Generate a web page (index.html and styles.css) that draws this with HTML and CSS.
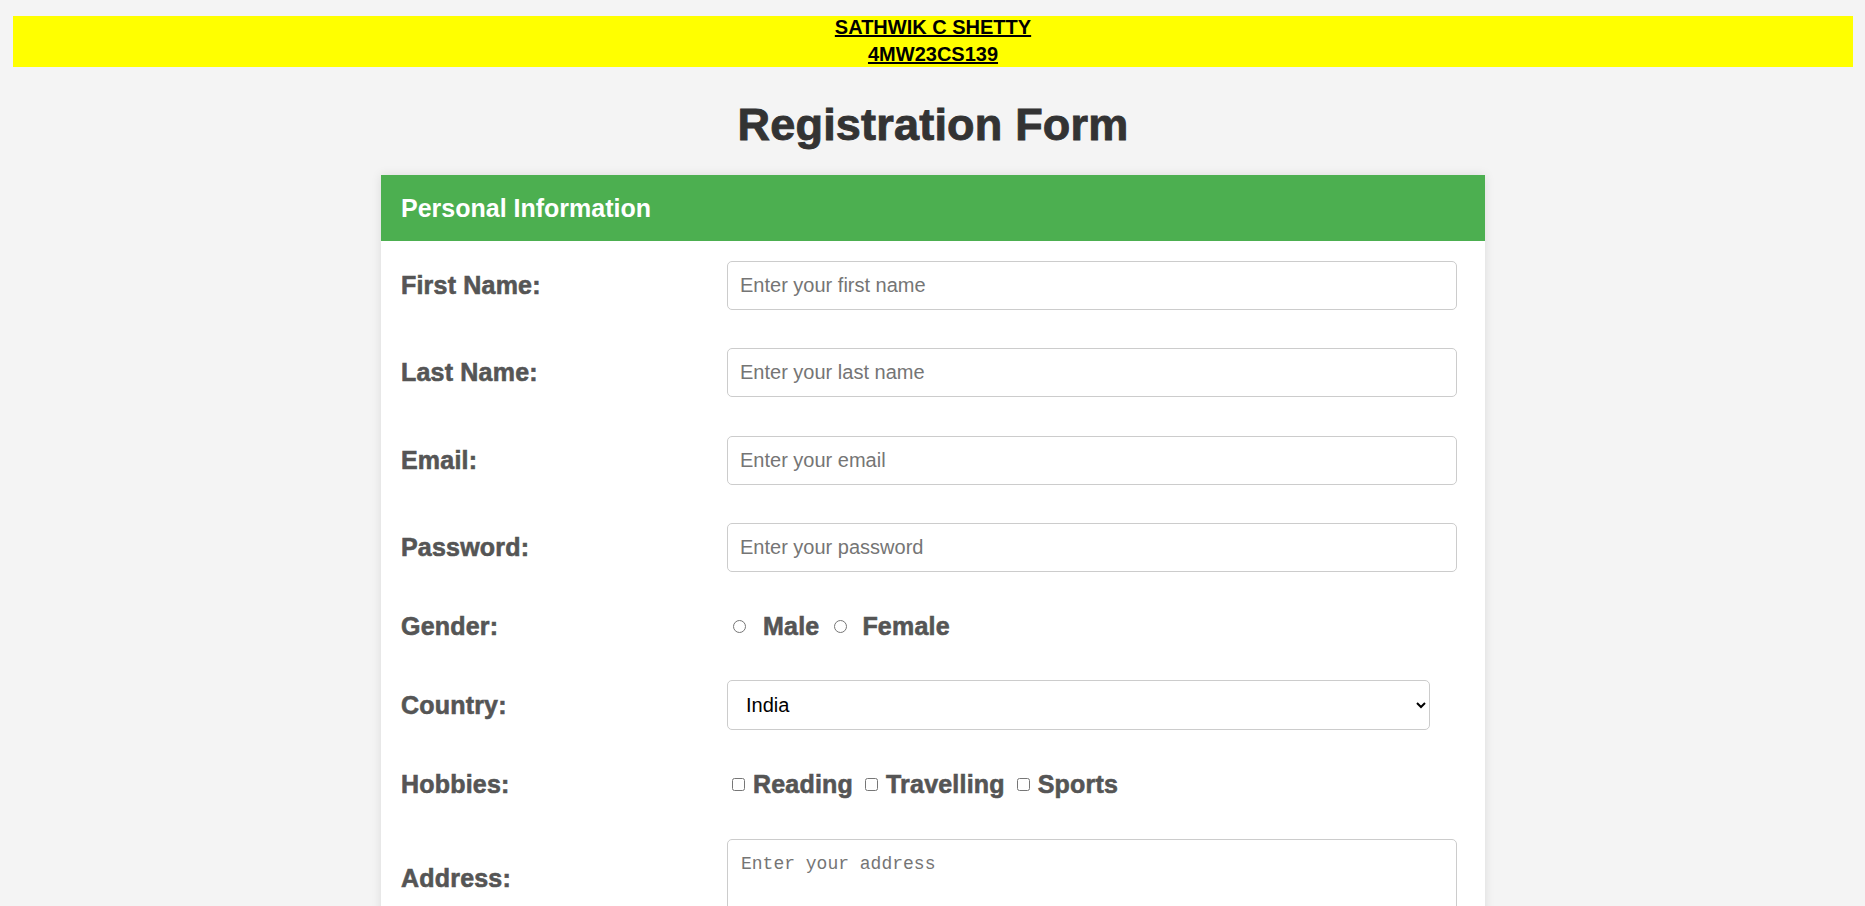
FILE: index.html
```html
<!DOCTYPE html>
<html lang="en">
<head>
<meta charset="utf-8">
<title>Registration Form</title>
<link rel="stylesheet" href="styles.css">
</head>
<body>
  <div class="banner">
    <div class="banner-line"><u>SATHWIK C SHETTY</u></div>
    <div class="banner-line second"><u>4MW23CS139</u></div>
  </div>

  <h1 class="title">Registration Form</h1>

  <div class="card">
    <div class="card-head">Personal Information</div>
    <form class="form">
      <label class="lbl" for="fname">First Name:</label>
      <input class="field" id="fname" type="text" placeholder="Enter your first name">

      <label class="lbl" for="lname">Last Name:</label>
      <input class="field" id="lname" type="text" placeholder="Enter your last name">

      <label class="lbl" for="email">Email:</label>
      <input class="field" id="email" type="email" placeholder="Enter your email">

      <label class="lbl" for="pass">Password:</label>
      <input class="field" id="pass" type="password" placeholder="Enter your password">

      <span class="lbl row-text">Gender:</span>
      <div class="choices row-text">
        <label class="opt"><input class="radio" type="radio" name="gender">Male</label>
        <label class="opt opt-next"><input class="radio" type="radio" name="gender">Female</label>
      </div>

      <label class="lbl" for="country">Country:</label>
      <select class="select" id="country">
        <option>India</option>
        <option>USA</option>
        <option>UK</option>
        <option>Australia</option>
      </select>

      <span class="lbl row-text">Hobbies:</span>
      <div class="choices row-text">
        <label class="opt"><input class="check" type="checkbox">Reading</label>
        <label class="opt opt-check"><input class="check" type="checkbox">Travelling</label>
        <label class="opt opt-check"><input class="check" type="checkbox">Sports</label>
      </div>

      <label class="lbl" for="addr">Address:</label>
      <textarea class="area" id="addr" placeholder="Enter your address"></textarea>

      <span class="lbl"></span>
      <button class="submit" type="submit">Register</button>
    </form>
  </div>
</body>
</html>
```

FILE: styles.css
```css
html {
  overflow: hidden;
}

body {
  margin: 16px 12px 0 13px;
  background: #f4f4f4;
  font-family: "Liberation Sans", Arial, sans-serif;
}

.banner {
  background: #ffff00;
  text-align: center;
  font-size: 20px;
  font-weight: bold;
  color: #000;
  padding-bottom: 1px;
}

.banner-line {
  line-height: 23px;
}

.banner-line.second {
  margin-top: 4px;
}

.banner u {
  text-decoration-thickness: 2px;
}

.title {
  margin: 32px 0 24px;
  text-align: center;
  font-size: 45px;
  font-weight: bold;
  color: #333;
  line-height: 52px;
  letter-spacing: 0.2px;
  -webkit-text-stroke: 0.9px #333;
}

.card {
  width: 60%;
  margin: 0 auto;
  background: #fff;
  box-shadow: 0 0 10px rgba(0, 0, 0, 0.1);
}

.card-head {
  height: 66px;
  display: flex;
  align-items: center;
  padding-left: 20px;
  background: #4caf50;
  color: #fff;
  font-size: 25px;
  font-weight: bold;
}

.form {
  display: grid;
  grid-template-columns: 326px 703px;
  row-gap: 38.6px;
  align-items: center;
  padding: 19.5px 20px 30px;
}

.lbl {
  font-size: 25px;
  font-weight: bold;
  color: #555;
  letter-spacing: 0.2px;
  -webkit-text-stroke: 0.6px #555;
}

.row-text {
  min-height: 31px;
  display: flex;
  align-items: center;
}

.field {
  box-sizing: border-box;
  width: 730px;
  height: 49px;
  padding: 0 12px;
  border: 1px solid #ccc;
  border-radius: 5px;
  font-family: "Liberation Sans", Arial, sans-serif;
  font-size: 20px;
  color: #000;
  background: #fff;
}

.field::placeholder {
  color: #757575;
}

.choices {
  font-size: 25px;
  font-weight: bold;
  color: #555;
  letter-spacing: 0.2px;
  -webkit-text-stroke: 0.6px #555;
}

.opt {
  display: inline-flex;
  align-items: center;
}

.radio {
  width: 13px;
  height: 13px;
  margin: 0 17px 0 6px;
}

.opt-next .radio {
  margin-left: 15px;
  margin-right: 15px;
}

.check {
  width: 13px;
  height: 13px;
  margin: 0 8px 0 5px;
}

.opt-check .check {
  margin-left: 12px;
  margin-right: 8px;
}

.select {
  box-sizing: border-box;
  width: 703px;
  height: 50px;
  padding: 0 8px 0 14px;
  border: 1px solid #ccc;
  border-radius: 5px;
  background: #fff;
  font-family: "Liberation Sans", Arial, sans-serif;
  font-size: 20px;
  color: #000;
}

.area {
  box-sizing: border-box;
  width: 730px;
  height: 80px;
  padding: 14px 13px 12px;
  border: 1px solid #ccc;
  border-radius: 5px;
  font-family: "Liberation Mono", monospace;
  font-size: 18px;
  resize: vertical;
}

.area::placeholder {
  color: #757575;
}

.submit {
  justify-self: start;
  padding: 12px 30px;
  border: none;
  border-radius: 5px;
  background: #4caf50;
  color: #fff;
  font-size: 20px;
  font-weight: bold;
}
```
